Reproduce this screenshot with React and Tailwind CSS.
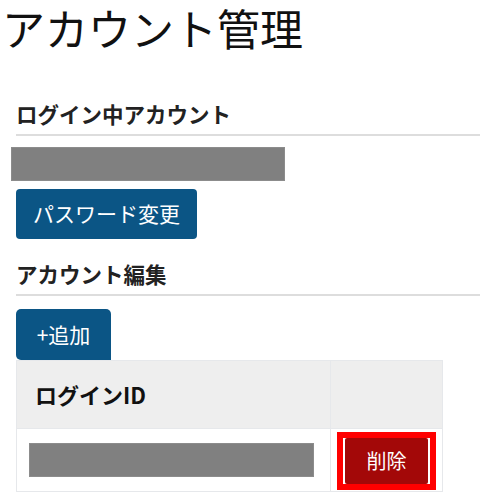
import React from 'react';

const jp = { fontFamily: '"Noto Sans CJK JP", "Noto Sans", sans-serif' };

const SectionHeading = ({ children, className = '' }) => (
  <h2 className={`text-[21.5px] leading-[28px] font-bold text-[#222] pb-[6px] border-b-2 border-[#dddddd] ${className}`}>{children}</h2>
);

const Redacted = ({ className = '' }) => (
  <div className={`h-[34px] bg-[#808080] border border-[#8c8c8c] ${className}`}></div>
);

export default function App() {
  return (
    <div className="w-[480px] h-[500px] bg-white overflow-hidden pl-[2px]" style={jp}>
      <h1 className="text-[43px] leading-[58px] font-normal text-[#111] -mt-[2px]">アカウント管理</h1>

      <div className="pl-[14px]">
        <SectionHeading className="mt-[44px]">ログイン中アカウント</SectionHeading>
        <Redacted className="w-[274px] mt-[11px] -ml-[5px]" />
        <button className="mt-[8px] h-[50px] px-[17px] bg-[#0b5585] text-white text-[21px] rounded-[4px]">パスワード変更</button>

        <SectionHeading className="mt-[21px]">アカウント編集</SectionHeading>
        <button className="mt-[13px] h-[51px] w-[95px] bg-[#0b5585] text-white text-[21px] rounded-t-[5px] rounded-bl-[5px]">+追加</button>

        <table className="w-[423px] border-collapse border border-[#e6e8eb]">
          <thead>
            <tr className="bg-[#eeeeee] h-[68px]">
              <th className="w-[313px] text-left pl-[18px] text-[22px] font-bold text-[#111] border-r border-[#e6e8eb]">ログインID</th>
              <th></th>
            </tr>
          </thead>
          <tbody>
            <tr className="h-[63px] border-t border-[#e6e8eb]">
              <td className="pl-[12px] pr-[16px] border-r border-[#e6e8eb]">
                <Redacted className="w-[285px]" />
              </td>
              <td className="pl-[6px] pr-[6px] pt-[2px]">
                <div className="w-[99px] h-[58px] border-[6px] border-[#ff0000] px-[2px] bg-white">
                  <button className="w-full h-full bg-[#a30808] text-white text-[20px] rounded-[2px]">削除</button>
                </div>
              </td>
            </tr>
          </tbody>
        </table>
      </div>
    </div>
  );
}
